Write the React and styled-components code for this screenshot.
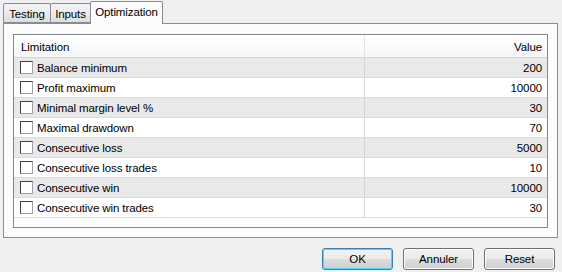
import React, { useState } from "react";
import styled, { createGlobalStyle } from "styled-components";

const Global = createGlobalStyle`
  html, body {
    margin: 0;
    padding: 0;
    background: #f0f0f0;
  }
  body {
    font-family: "Liberation Sans", Arial, sans-serif;
    font-size: 11px;
    color: #000;
  }
`;

const tabs = [
  { name: "Testing", width: 48 },
  { name: "Inputs", width: 41 },
  { name: "Optimization", width: 73 },
];

const rows = [
  { label: "Balance minimum", value: "200" },
  { label: "Profit maximum", value: "10000" },
  { label: "Minimal margin level %", value: "30" },
  { label: "Maximal drawdown", value: "70" },
  { label: "Consecutive loss", value: "5000" },
  { label: "Consecutive loss trades", value: "10" },
  { label: "Consecutive win", value: "10000" },
  { label: "Consecutive win trades", value: "30" },
];

const App = () => {
  const [tab, setTab] = useState("Optimization");
  const [checked, setChecked] = useState({});

  return (
    <S.Window>
      <Global />
      <S.TabBar>
        {tabs.map((t) => (
          <S.Tab
            key={t.name}
            $active={tab === t.name}
            $w={t.width}
            onClick={() => setTab(t.name)}
          >
            {t.name}
          </S.Tab>
        ))}
      </S.TabBar>
      <S.Panel>
        <S.List>
          <S.Header>
            <S.HeadCell>Limitation</S.HeadCell>
            <S.HeadCell $right>Value</S.HeadCell>
          </S.Header>
          {rows.map((r, i) => (
            <S.Row key={r.label} $odd={i % 2 === 0}>
              <S.NameCell>
                <S.Check
                  $on={checked[r.label]}
                  onClick={() => setChecked({ ...checked, [r.label]: !checked[r.label] })}
                />
                {r.label}
              </S.NameCell>
              <S.ValueCell>{r.value}</S.ValueCell>
            </S.Row>
          ))}
        </S.List>
      </S.Panel>
      <S.Buttons>
        <S.Button $default>OK</S.Button>
        <S.Button>Annuler</S.Button>
        <S.Button>Reset</S.Button>
      </S.Buttons>
    </S.Window>
  );
};

const S = {
  Window: styled.div`
    width: 562px;
    height: 272px;
    box-sizing: border-box;
    padding: 1px 4px 0 3px;
    display: flex;
    flex-direction: column;
  `,
  TabBar: styled.div`
    display: flex;
    align-items: flex-end;
    height: 22px;
    position: relative;
    z-index: 1;
  `,
  Tab: styled.div`
    box-sizing: border-box;
    width: ${(p) => p.$w}px;
    height: ${(p) => (p.$active ? "23px" : "20px")};
    margin-bottom: ${(p) => (p.$active ? "-1px" : "0")};
    margin-right: ${(p) => (p.$active ? "0" : "-1px")};
    padding-top: ${(p) => (p.$active ? "3px" : "3px")};
    border: 1px solid #898c95;
    border-bottom: ${(p) => (p.$active ? "none" : "1px solid #898c95")};
    border-radius: 2px 2px 0 0;
    background: ${(p) =>
      p.$active ? "#fcfcfc" : "linear-gradient(#f3f3f3, #ebebeb 50%, #dddddd)"};
    text-align: center;
    font-size: 11.5px;
    letter-spacing: -0.1px;
    line-height: 14px;
    cursor: default;
  `,
  Panel: styled.div`
    box-sizing: border-box;
    height: 215px;
    border: 1px solid #898c95;
    background: #fcfcfc;
    padding: 10px 9px 10px 9px;
  `,
  List: styled.div`
    box-sizing: border-box;
    height: 194px;
    border: 1px solid #828790;
    background: #fff;
  `,
  Header: styled.div`
    display: grid;
    grid-template-columns: 351px 1fr;
    height: 22px;
    background: linear-gradient(#ffffff, #f5f6f8);
    border-bottom: 1px solid #d5d5d5;
  `,
  HeadCell: styled.div`
    display: flex;
    align-items: center;
    justify-content: ${(p) => (p.$right ? "flex-end" : "flex-start")};
    padding: ${(p) => (p.$right ? "1px 5px 0 0" : "1px 0 0 7px")};
    border-right: ${(p) => (p.$right ? "none" : "1px solid #e3e4e6")};
    font-size: 11.5px;
    letter-spacing: -0.1px;
  `,
  Row: styled.div`
    display: grid;
    grid-template-columns: 351px 1fr;
    height: 20px;
    box-sizing: border-box;
    background: ${(p) => (p.$odd ? "#e9e9e9" : "#ffffff")};
    border-bottom: 1px solid #dcdcdc;
  `,
  NameCell: styled.div`
    display: flex;
    align-items: center;
    gap: 4px;
    padding-left: 6px;
    border-right: 1px solid #d4d4d4;
    font-size: 11.5px;
    letter-spacing: -0.1px;
  `,
  ValueCell: styled.div`
    display: flex;
    align-items: center;
    justify-content: flex-end;
    padding-right: 5px;
    font-size: 11.5px;
    letter-spacing: -0.1px;
  `,
  Check: styled.span`
    box-sizing: border-box;
    width: 13px;
    height: 13px;
    border: 1px solid #a0a0a0;
    border-top-color: #404040;
    border-left-color: #404040;
    background: #fff;
    position: relative;
    &::after {
      content: "${(p) => (p.$on ? "✓" : "")}";
      position: absolute;
      left: 1px;
      top: -2px;
      font-size: 11px;
    }
  `,
  Buttons: styled.div`
    display: flex;
    justify-content: flex-end;
    gap: 10px;
    margin-top: 10px;
    padding-right: 3px;
  `,
  Button: styled.button`
    box-sizing: border-box;
    width: 71px;
    height: 22px;
    padding: 0;
    border: 1px solid ${(p) => (p.$default ? "#3c7fb1" : "#707070")};
    border-radius: 3px;
    background: linear-gradient(#f2f2f2, #ebebeb 48%, #dddddd 52%, #cfcfcf);
    box-shadow: ${(p) => (p.$default ? "inset 0 0 0 1px #48d8fb" : "inset 0 0 0 1px #fcfcfc")};
    font-family: "Liberation Sans", Arial, sans-serif;
    font-size: 11.5px;
    letter-spacing: -0.1px;
    color: #000;
  `,
};

export default App;
